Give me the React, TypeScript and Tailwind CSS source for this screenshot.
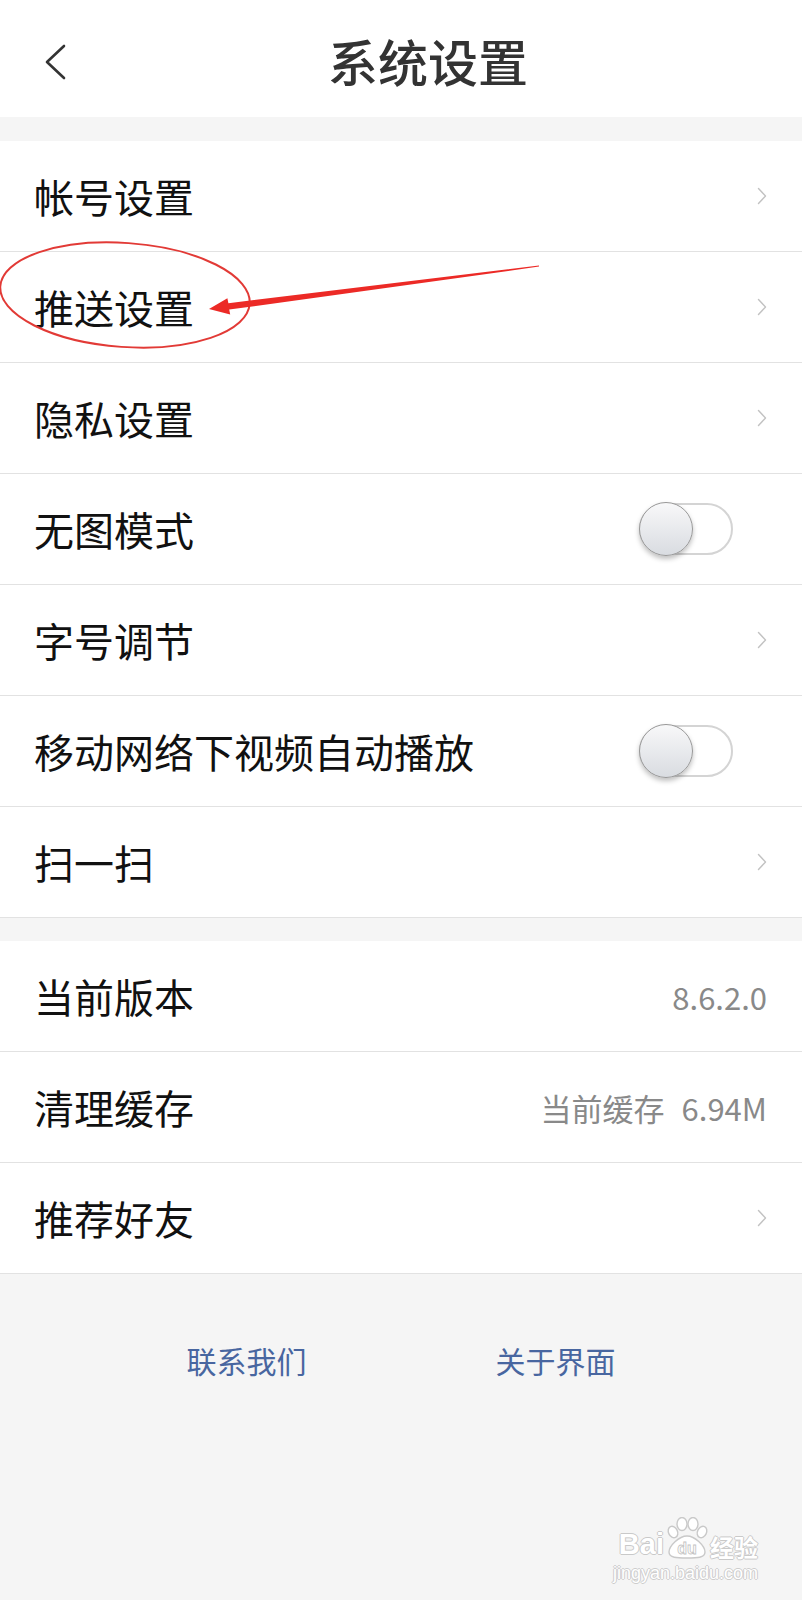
import React from 'react';

type Row = {
  label: string;
  kind: 'arrow' | 'toggle' | 'value';
  value?: string;
  note?: string;
};

const groupOne: Row[] = [
  { label: '帐号设置', kind: 'arrow' },
  { label: '推送设置', kind: 'arrow' },
  { label: '隐私设置', kind: 'arrow' },
  { label: '无图模式', kind: 'toggle' },
  { label: '字号调节', kind: 'arrow' },
  { label: '移动网络下视频自动播放', kind: 'toggle' },
  { label: '扫一扫', kind: 'arrow' },
];

const groupTwo: Row[] = [
  { label: '当前版本', kind: 'value', value: '8.6.2.0' },
  { label: '清理缓存', kind: 'value', note: '当前缓存', value: '6.94M' },
  { label: '推荐好友', kind: 'arrow' },
];

function Chevron() {
  return (
    <svg width="10" height="18" viewBox="0 0 10 18" fill="none">
      <path d="M1.5 1.5 L8.5 9 L1.5 16.5" stroke="#c2c2c2" strokeWidth="1.4" strokeLinecap="round" strokeLinejoin="round" />
    </svg>
  );
}

function Toggle() {
  return (
    <div className="mr-[34px] flex h-[52px] w-[94px] items-center rounded-full border-2 border-[#d4d4d4] bg-white">
      <div className="-ml-[2px] h-[54px] w-[54px] rounded-full border-[1.5px] border-[#989898] bg-gradient-to-b from-[#f8f8f9] to-[#d9dce1] shadow-[0_3px_5px_rgba(0,0,0,0.25)]" />
    </div>
  );
}

function SettingRow({ row }: { row: Row }) {
  return (
    <div className="flex h-[111px] items-center justify-between border-b border-[#e2e2e2] bg-white pl-[34px] pr-[35px]">
      <span className="text-[40px] leading-none text-[#111111]">{row.label}</span>
      {row.kind === 'arrow' && <Chevron />}
      {row.kind === 'toggle' && <Toggle />}
      {row.kind === 'value' && (
        <span className="flex items-center text-[31px] leading-none text-[#898989]">
          {row.note && <span className="mr-[17px]">{row.note}</span>}
          <span>{row.value}</span>
        </span>
      )}
    </div>
  );
}

function Paw() {
  return (
    <svg width="46" height="42" viewBox="0 0 46 42">
      <g fill="#ffffff" stroke="#c9c9c9" strokeWidth="1.4">
        <ellipse cx="9" cy="15" rx="4.5" ry="6" transform="rotate(-25 9 15)" />
        <ellipse cx="18" cy="7" rx="5" ry="6.5" />
        <ellipse cx="29" cy="7" rx="5" ry="6.5" />
        <ellipse cx="38" cy="15" rx="4.5" ry="6" transform="rotate(25 38 15)" />
        <path d="M23 19 C31 19 41 29 41 35 C41 41 33 41 23 41 C13 41 5 41 5 35 C5 29 15 19 23 19 Z" />
      </g>
      <text x="23" y="37" textAnchor="middle" fontSize="16" fontWeight="700" fontFamily="'Liberation Sans', Arial, sans-serif" fill="#ffffff" stroke="#c4c4c4" strokeWidth="0.8">
        du
      </text>
    </svg>
  );
}

export default function App() {
  return (
    <div className="relative flex min-h-screen flex-col bg-[#f5f5f5] font-['Noto_Sans_CJK_SC','Noto_Sans',sans-serif]">
      <header className="flex h-[117px] items-center bg-white pl-[44px]">
        <svg width="24" height="36" viewBox="0 0 24 36" fill="none" className="mt-[6px]">
          <path d="M20 2 L3 18 L20 34" stroke="#333333" strokeWidth="2.6" strokeLinecap="round" strokeLinejoin="round" />
        </svg>
        <h1 className="ml-[260px] mt-[2px] text-[50px] font-medium leading-none text-[#333333]">系统设置</h1>
      </header>

      <div className="h-[24px]" />
      <section>
        {groupOne.map((row) => (
          <SettingRow key={row.label} row={row} />
        ))}
      </section>

      <div className="h-[23px]" />
      <section>
        {groupTwo.map((row) => (
          <SettingRow key={row.label} row={row} />
        ))}
      </section>

      <footer className="flex flex-1 flex-col">
        <div className="flex justify-center gap-[189px] pt-[66px] text-[30px] leading-[40px] text-[#4866a0]">
          <span>联系我们</span>
          <span>关于界面</span>
        </div>

        <div className="mt-auto mb-[18px] mr-[44px] flex flex-col items-end">
          <div className="flex items-end text-white">
            <span className="font-['Liberation_Sans',sans-serif] text-[29px] font-bold leading-none [text-shadow:1px_0_#c9c9c9,-1px_0_#c9c9c9,0_1px_#c9c9c9,0_-1px_#c9c9c9]">
              Bai
            </span>
            <Paw />
            <span className="text-[24px] font-bold leading-none [text-shadow:1px_0_#c9c9c9,-1px_0_#c9c9c9,0_1px_#c9c9c9,0_-1px_#c9c9c9]">
              经验
            </span>
          </div>
          <span className="mt-[5px] font-['Liberation_Sans',sans-serif] text-[18px] leading-none text-white [text-shadow:1px_0_#cdcdcd,-1px_0_#cdcdcd,0_1px_#cdcdcd,0_-1px_#cdcdcd]">
            jingyan.baidu.com
          </span>
        </div>
      </footer>

      <svg className="pointer-events-none absolute left-0 top-0" width="802" height="1600" viewBox="0 0 802 1600">
        <ellipse cx="125" cy="295" rx="125" ry="52" transform="rotate(4 125 295)" fill="none" stroke="#e23a36" strokeWidth="2" />
        <polygon
          points="539,265.4 228.4,303.2 227.4,298.2 209,309 230.2,314.6 229.2,309.6 539,266.6"
          fill="#ec2a26"
        />
      </svg>
    </div>
  );
}
